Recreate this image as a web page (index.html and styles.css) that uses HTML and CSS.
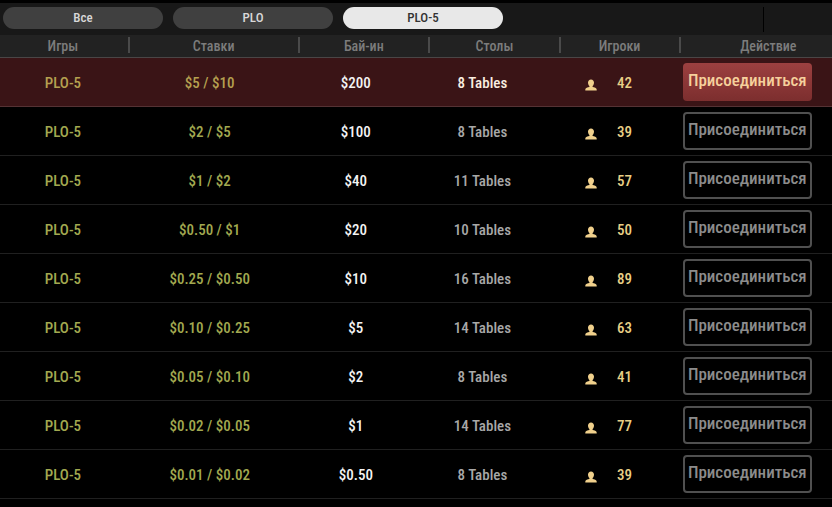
FILE: index.html
```
<!DOCTYPE html>
<html lang="ru">
<head>
    <meta charset="UTF-8">
    <meta name="viewport" content="width=device-width, initial-scale=1.0">
    <title>PLO-5</title>
    <link rel="stylesheet" href="styles.css">
</head>
<body>
    <div class="lobby">
        <nav class="tabs">
            <button type="button" class="tab">Все</button>
            <button type="button" class="tab">PLO</button>
            <button type="button" class="tab active">PLO-5</button>
            <div class="tabs-end"></div>
        </nav>

        <table class="games">
            <colgroup>
                <col class="col-game">
                <col class="col-stakes">
                <col class="col-buyin">
                <col class="col-tables">
                <col class="col-players">
                <col class="col-action">
            </colgroup>
            <thead>
                <tr>
                    <th>Игры</th>
                    <th>Ставки</th>
                    <th>Бай-ин</th>
                    <th>Столы</th>
                    <th>Игроки</th>
                    <th>Действие</th>
                </tr>
            </thead>
            <tbody id="gameRows"></tbody>
        </table>
    </div>

    <script>
        const games = [
            { stakes: '$5 / $10', buyin: '$200', tables: 8, players: 42 },
            { stakes: '$2 / $5', buyin: '$100', tables: 8, players: 39 },
            { stakes: '$1 / $2', buyin: '$40', tables: 11, players: 57 },
            { stakes: '$0.50 / $1', buyin: '$20', tables: 10, players: 50 },
            { stakes: '$0.25 / $0.50', buyin: '$10', tables: 16, players: 89 },
            { stakes: '$0.10 / $0.25', buyin: '$5', tables: 14, players: 63 },
            { stakes: '$0.05 / $0.10', buyin: '$2', tables: 8, players: 41 },
            { stakes: '$0.02 / $0.05', buyin: '$1', tables: 14, players: 77 },
            { stakes: '$0.01 / $0.02', buyin: '$0.50', tables: 8, players: 39 }
        ];

        // First row is the selected one
        document.getElementById('gameRows').innerHTML = games.map((game, i) => `
            <tr class="${i === 0 ? 'selected' : ''}">
                <td class="game">PLO-5</td>
                <td class="stakes">${game.stakes}</td>
                <td class="buyin">${game.buyin}</td>
                <td class="tables">${game.tables} Tables</td>
                <td class="players">
                    <div class="players-inner">
                        <svg class="icon" viewBox="0 0 12 12" aria-hidden="true">
                            <path d="M6 0.4C4.2 0.4 3 1.7 3 3.6C3 5.2 3.6 6.4 4.4 7.1V7.9C2.8 8.4 0.3 8.7 0.3 10.4V11.6H11.7V10.4C11.7 8.7 9.2 8.4 7.6 7.9V7.1C8.4 6.4 9 5.2 9 3.6C9 1.7 7.8 0.4 6 0.4Z"/>
                        </svg>
                        <span>${game.players}</span>
                    </div>
                </td>
                <td class="action"><button type="button" class="join">Присоединиться</button></td>
            </tr>
        `).join('');
    </script>
</body>
</html>
```

FILE: styles.css
```
* {
    box-sizing: border-box;
}

body {
    margin: 0;
    background-color: #000;
    font-family: "Roboto Condensed", Roboto, sans-serif;
}

.lobby {
    border-top: 3px solid #000;
}

.tabs {
    display: flex;
    gap: 10px;
    padding: 4px 3px 3px;
    height: 32px;
    background-color: #181818;
}

.tab {
    flex: 0 1 160px;
    height: 22px;
    padding: 0 0 2px;
    border: none;
    border-radius: 11px;
    background-color: #404040;
    color: #d8d8d8;
    font-family: inherit;
    font-size: 13px;
    font-weight: 500;
    cursor: pointer;
}

.tab.active {
    background-color: #e8e8e8;
    color: #333;
}

.tabs-end {
    width: 66px;
    margin-left: auto;
    border-left: 1px solid #000;
}

.games {
    width: 100%;
    table-layout: fixed;
    border-collapse: separate;
    border-spacing: 0;
}

.col-game {
    width: 15.6%;
}

.col-stakes {
    width: 20.4%;
}

.col-buyin,
.col-tables {
    width: 15.7%;
}

.col-players {
    width: 14.4%;
}

th {
    height: 23px;
    padding: 0 2px 0 0;
    border-bottom: 1px solid #4a4646;
    background: linear-gradient(#4a4a4a, #4a4a4a) right 2px / 2px 16px no-repeat #222;
    color: #7c7c7c;
    font-size: 14px;
    font-weight: 500;
    line-height: 18px;
}

th:first-child {
    padding-right: 4px;
}

th:last-child {
    padding: 0 0 0 24px;
    background: #222;
}

td {
    height: 49px;
    padding: 1px 0 0;
    border-bottom: 1px solid #202020;
    font-size: 15px;
    font-weight: 500;
    line-height: 20px;
    text-align: center;
}

td.game,
td.stakes {
    color: #a2a950;
}

td.game {
    padding-right: 4px;
}

td.stakes {
    padding-right: 10px;
}

td.buyin {
    padding-right: 18px;
    color: #f4f4f4;
}

td.tables {
    padding-right: 26px;
    color: #a8a8a8;
}

td.players {
    color: #e8cf86;
}

.players-inner {
    display: flex;
    align-items: center;
    justify-content: center;
    gap: 20px;
    padding-right: 24px;
}

.icon {
    width: 12px;
    height: 12px;
    margin-top: 4px;
    fill: #f0d08c;
}

td.action {
    padding: 0 20px 0 2px;
}

.join {
    display: block;
    width: 100%;
    height: 38px;
    padding: 0 0 4px;
    border: 2px solid #505050;
    border-radius: 4px;
    background-color: #000;
    color: #8c8c8c;
    font-family: inherit;
    font-size: 17px;
    font-weight: 500;
    white-space: nowrap;
    cursor: pointer;
}

.selected td {
    background-color: #3a1416;
    border-bottom-color: #553234;
}

.selected td.game,
.selected td.stakes {
    color: #b5a050;
}

.selected td.tables {
    color: #fbeee0;
}

.selected .join {
    border-color: transparent;
    background: linear-gradient(#9c4040, #7c2e2e) border-box;
    color: #f6d09c;
}
```
